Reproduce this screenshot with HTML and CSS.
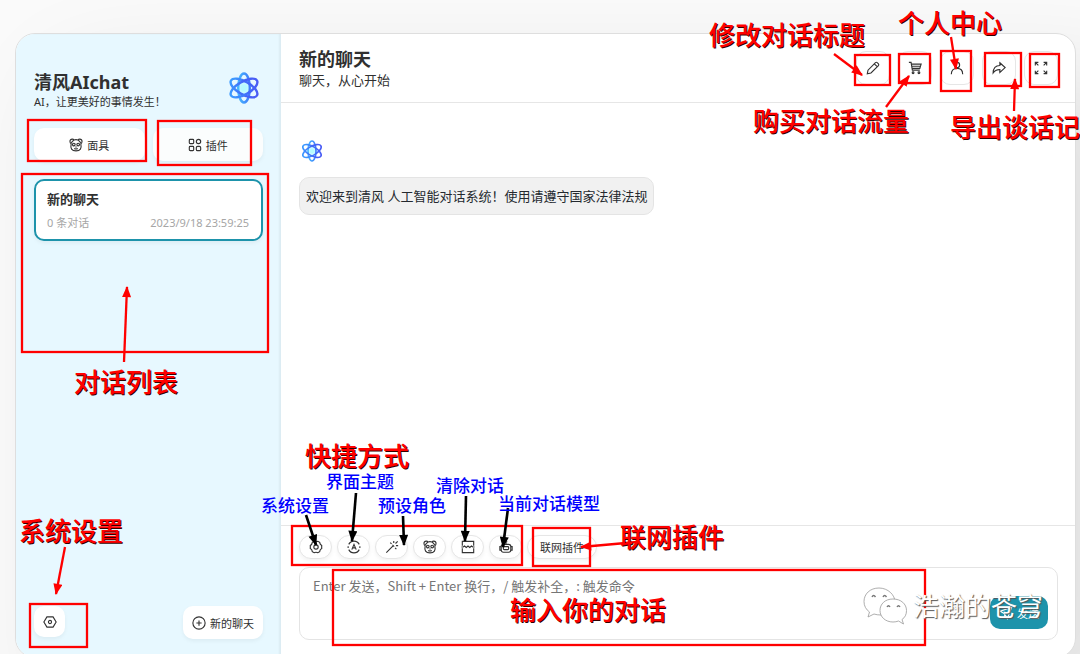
FILE: index.html
```html
<!DOCTYPE html>
<html lang="zh-CN">
<head>
<meta charset="utf-8">
<meta name="viewport" content="width=device-width, initial-scale=1">
<title>清风AIchat</title>
<link rel="stylesheet" href="styles.css">
</head>
<body>
<svg class="defs" aria-hidden="true">
  <defs>
    <linearGradient id="atom" x1="0" y1="0" x2="1" y2="0">
      <stop offset="0" stop-color="#3d9cff"/><stop offset="0.6" stop-color="#4266f8"/><stop offset="1" stop-color="#4a5cf5"/>
    </linearGradient>
    <linearGradient id="atomTall" x1="0" y1="0" x2="1" y2="0">
      <stop offset="0" stop-color="#46b8ff"/><stop offset="1" stop-color="#3f7bfa"/>
    </linearGradient>
    <radialGradient id="core"><stop offset="0.3" stop-color="#b5fbff"/><stop offset="1" stop-color="#b5fbff" stop-opacity="0.200"/></radialGradient>
    <symbol id="logo" viewBox="0 0 32 32">
      <circle cx="16" cy="16" r="8" fill="url(#core)"/>
      <g fill="none" stroke-width="2.400">
        <ellipse cx="16" cy="16" rx="5.800" ry="14.500" stroke="url(#atomTall)"/>
        <ellipse cx="16" cy="16" rx="15" ry="6.500" transform="rotate(30 16 16)" stroke="url(#atom)"/>
        <ellipse cx="16" cy="16" rx="15" ry="6.500" transform="rotate(-30 16 16)" stroke="url(#atom)"/>
      </g>
    </symbol>
    <symbol id="bear" viewBox="0 0 16 16">
      <path d="M2.500 6.500C.8 5.500.8 3 1.800 2S5 1.200 5.600 2.200Q8 1.500 10.400 2.200C11 1.200 13.200 1 14.200 2S15.200 5.500 13.500 6.500Q15.300 14.700 8 14.700T2.500 6.500Z"/>
      <path d="M2.500 5.500L5.600 2.200M13.500 5.500L10.400 2.200"/>
      <circle cx="5.500" cy="7.500" r="1.500"/><circle cx="10.500" cy="7.500" r="1.500"/>
      <path d="M7.200 10.300h1.600M6 12q2 1.200 4 0"/>
    </symbol>
  </defs>
</svg>

<div class="page">
  <div class="window">
    <aside class="sidebar">
      <header class="brand">
        <div>
          <h1 class="title">清风AIchat</h1>
          <p class="brand-sub">AI，让更美好的事情发生！</p>
        </div>
        <svg class="brand-logo" aria-hidden="true"><use href="#logo"/></svg>
      </header>
      <div class="side-tabs">
        <button class="side-btn" type="button"><svg class="icon"><use href="#bear"/></svg>面具</button>
        <button class="side-btn side-btn-soft" type="button">
          <svg class="icon" viewBox="0 0 16 16"><rect x="1.500" y="1.500" width="5" height="5" rx="1"/><circle cx="12" cy="4" r="2.500"/><rect x="1.500" y="9.500" width="5" height="5" rx="1"/><rect x="9.500" y="9.500" width="5" height="5" rx="1.500"/></svg>插件
        </button>
      </div>
      <nav class="chat-list">
        <a class="chat-item" href="#">
          <strong class="chat-name">新的聊天</strong>
          <span class="chat-meta"><span>0 条对话</span><time>2023/9/18 23:59:25</time></span>
        </a>
      </nav>
      <footer class="side-foot">
        <button class="side-btn square" type="button" aria-label="设置">
          <svg class="icon" viewBox="0 0 16 16"><path d="M4.500 2.200h7L15 8l-3.500 5.800h-7L1 8z"/><circle cx="8" cy="8" r="1.800"/></svg>
        </button>
        <button class="side-btn new-chat" type="button">
          <svg class="icon" viewBox="0 0 16 16"><circle cx="8" cy="8" r="7"/><path d="M8 5v6M5 8h6"/></svg>新的聊天
        </button>
      </footer>
    </aside>

    <main class="chat">
      <header class="chat-head">
        <div>
          <h2 class="title">新的聊天</h2>
          <p class="chat-sub">聊天，从心开始</p>
        </div>
        <div class="tools">
          <button class="tool" type="button" aria-label="修改标题"><svg class="icon" viewBox="0 0 16 16"><path d="M1.500 14.500l.8-4 8.500-8.700q1-.8 2 0l1.400 1.400q.8 1 0 2L5.700 13.700zM9.500 3.200l3.300 3.300"/></svg></button>
          <button class="tool" type="button" aria-label="购买流量"><svg class="icon" viewBox="0 0 16 16"><path d="M1 1.500h2.500L5 10.500h8.500M4 3.500h11l-1.500 5H5M4 6h10"/><circle cx="5.800" cy="13.500" r="1"/><circle cx="12.500" cy="13.500" r="1"/></svg></button>
          <button class="tool" type="button" aria-label="个人中心"><svg class="icon" viewBox="0 0 16 16"><circle cx="8" cy="4.500" r="3"/><path d="M1.500 15c0-4 2.500-6.500 6.500-6.500s6.500 2.500 6.500 6.500"/></svg></button>
          <button class="tool" type="button" aria-label="导出"><svg class="icon" viewBox="0 0 16 16"><path d="M9 2l6 5.500L9 13V9.800Q4 9.500 1.300 13.500 1.500 5.500 9 5.200z"/></svg></button>
          <button class="tool" type="button" aria-label="全屏"><svg class="icon" viewBox="0 0 16 16"><path d="M5 1.500H1.500V5M1.500 1.500L5 5M11 1.500h3.500V5M14.500 1.500L11 5M5 14.500H1.500V11M1.500 14.500L5 11M11 14.500h3.500V11M14.500 14.500L11 11"/></svg></button>
        </div>
      </header>

      <section class="messages">
        <svg class="avatar" aria-hidden="true"><use href="#logo"/></svg>
        <p class="bubble">欢迎来到清风 人工智能对话系统！使用请遵守国家法律法规</p>
      </section>

      <form class="composer">
        <div class="chips">
          <button class="chip" type="button" aria-label="系统设置"><svg class="icon" viewBox="0 0 16 16"><path d="M5.800 1.500q2.200 1 4.400 0l2 1.200q.2 2.200 2.300 3.500v3.600q-2.100 1-2.300 3.500l-2 1.200q-2.200-1-4.400 0l-2-1.200Q3.600 11 1.500 9.800V6.200Q3.600 5 3.800 2.700z"/><circle cx="8" cy="8" r="2.500"/></svg></button>
          <button class="chip" type="button" aria-label="界面主题"><svg class="icon" viewBox="0 0 16 16"><path d="M2 5a6.700 6.700 0 0 1 12 0M2 11a6.700 6.700 0 0 0 12 0M1.300 7v2M14.700 7v2M5.500 11L8 5l2.500 6M6.500 9h3"/></svg></button>
          <button class="chip" type="button" aria-label="快捷指令"><svg class="icon" viewBox="0 0 16 16"><path d="M1.500 14.500l8-8M8.500 5.500l2 2M10 1v2.500M6 3l1.500 1.500M12 4l2.500-2.500M12.500 6.500H15M11.500 9l1.500 1.500"/></svg></button>
          <button class="chip" type="button" aria-label="预设角色"><svg class="icon"><use href="#bear"/></svg></button>
          <button class="chip" type="button" aria-label="清除对话"><svg class="icon" viewBox="0 0 16 16"><path d="M1.500 6.500v-5h13v5M1.500 9.500v5h13v-5M.5 8h2l1.500-1.200L6 8.500l2-1.700 2 1.700 2-1.700L13.500 8h2"/></svg></button>
          <button class="chip" type="button" aria-label="当前对话模型"><svg class="icon" viewBox="0 0 16 16"><rect x="2.500" y="5" width="11" height="9" rx="2.500"/><rect x="5" y="7.500" width="6" height="3.500" rx="1"/><path d="M8 5V2M6.500 2h3M2.500 7.500H1v4h1.500M13.500 7.500H15v4h-1.500"/></svg></button>
          <button class="chip chip-text" type="button">联网插件</button>
        </div>
        <div class="input-box">
          <textarea class="input" aria-label="消息" placeholder="Enter 发送，Shift + Enter 换行，/ 触发补全，: 触发命令"></textarea>
          <button class="send" type="button"><svg class="icon" viewBox="0 0 16 16"><path d="M14.500 1.500L1.500 6l5 3 3 5.500zM6.500 9.500v4"/></svg>发送</button>
        </div>
      </form>
    </main>
  </div>

  <div class="notes">
    <svg class="marks" width="1080" height="654" aria-hidden="true">
      <defs>
        <marker id="headRed" viewBox="0 0 10 8" refX="9" refY="4" markerWidth="12" markerHeight="9" markerUnits="userSpaceOnUse" orient="auto"><path d="M0 0l10 4-10 4z" fill="#f00"/></marker>
        <marker id="headBlack" viewBox="0 0 10 8" refX="9" refY="4" markerWidth="12" markerHeight="9" markerUnits="userSpaceOnUse" orient="auto"><path d="M0 0l10 4-10 4z"/></marker>
      </defs>
      <g fill="none" stroke="#f00" stroke-width="2.300">
        <rect x="28" y="120" width="118" height="41"/>
        <rect x="158" y="121" width="93" height="44"/>
        <rect x="22" y="174" width="246" height="178"/>
        <rect x="30" y="604" width="57" height="43"/>
        <rect x="855" y="55" width="35" height="30"/>
        <rect x="899" y="54" width="31" height="29"/>
        <rect x="941" y="51" width="30" height="40"/>
        <rect x="985" y="53" width="36" height="33"/>
        <rect x="1030" y="54" width="29" height="33"/>
        <rect x="292" y="526" width="230" height="39"/>
        <rect x="533" y="528" width="57" height="38"/>
        <rect x="333" y="570" width="592" height="75"/>
      </g>
      <g fill="none" stroke="#f00" stroke-width="2.300">
        <path d="M124 362L127 287" marker-end="url(#headRed)"/>
        <path d="M65 547L56 594" marker-end="url(#headRed)"/>
        <path d="M834 54L862 75" marker-end="url(#headRed)"/>
        <path d="M886 107L909 76" marker-end="url(#headRed)"/>
        <path d="M951 37L956 69" marker-end="url(#headRed)"/>
        <path d="M1014 111L1015 79" marker-end="url(#headRed)"/>
        <path d="M637 542L581 547" marker-end="url(#headRed)"/>
      </g>
      <g fill="none" stroke="#000" stroke-width="2.600">
        <path d="M306 515L316 545" marker-end="url(#headBlack)"/>
        <path d="M356 493L352 541" marker-end="url(#headBlack)"/>
        <path d="M403 516L404 545" marker-end="url(#headBlack)"/>
        <path d="M466 496L465 541" marker-end="url(#headBlack)"/>
        <path d="M508 508L503 547" marker-end="url(#headBlack)"/>
      </g>
    </svg>
    <span class="note n-title">修改对话标题</span>
    <span class="note n-user">个人中心</span>
    <span class="note n-buy">购买对话流量</span>
    <span class="note n-export">导出谈话记</span>
    <span class="note n-list">对话列表</span>
    <span class="note n-settings">系统设置</span>
    <span class="note n-quick">快捷方式</span>
    <span class="note n-net">联网插件</span>
    <span class="note n-input">输入你的对话</span>
    <span class="note small s-settings">系统设置</span>
    <span class="note small s-theme">界面主题</span>
    <span class="note small s-role">预设角色</span>
    <span class="note small s-clear">清除对话</span>
    <span class="note small s-model">当前对话模型</span>
    <div class="watermark">
      <svg class="wechat" viewBox="0 0 44 38" aria-hidden="true">
        <g fill="#fff" stroke="#999" stroke-width="0.800">
          <path d="M16 1C7 1 1 7 1 14.500c0 4.500 2 8 5.500 10.500L5 30l6-3q3 1 7 1c8 0 14-6 14-13S25 1 16 1z"/>
          <path d="M30 12c-8 0-13 5-13 11.500S22.500 35 30 35q3 0 5.500-1l5 3-1.500-4.500c3-2 4.500-5 4.500-9C43.500 17 38 12 30 12z"/>
        </g>
        <path d="M9 10q1.500-3 3.500 0M20 10q1.500-3 3.500 0M24 20q1.500-2.500 3 0M34 20q1.500-2.500 3 0" fill="none" stroke="#777" stroke-width="1.400"/>
      </svg>
      <span>浩瀚的苍穹</span>
    </div>
  </div>
</div>
</body>
</html>
```
FILE: styles.css
```css
* { box-sizing: border-box; }

body {
  margin: 0;
  background: #fafafa;
  color: #303030;
  font-family: "Noto Sans", "Noto Sans CJK SC", sans-serif;
  font-size: 13px;
}

h1, h2, p { margin: 0; }

button, textarea { font: inherit; color: inherit; }

.defs { position: absolute; width: 0; height: 0; }

.page {
  position: relative;
  height: 100vh;
  padding: 33px 4px 0 15px;
  overflow: hidden;
}

.window {
  display: flex;
  height: calc(100vh - 29px);
  overflow: hidden;
  background: #fff;
  border: 1px solid #dedede;
  border-radius: 20px;
  box-shadow: 50px 50px 100px 10px rgba(0, 0, 0, 0.1);
}

.icon {
  flex: none;
  width: 14px;
  height: 14px;
  fill: none;
  stroke: #333;
  stroke-width: 1.300;
}

.title {
  font-size: 18px;
  line-height: 24px;
  font-weight: 700;
}

.sidebar {
  display: flex;
  flex-direction: column;
  flex: 0 0 265px;
  padding: 36px 18px 18px;
  background: #e7f8ff;
  box-shadow: inset -2px 0 2px rgba(0, 0, 0, 0.05);
}

.brand {
  display: flex;
  justify-content: space-between;
}

.brand-sub { font-size: 11px; line-height: 16px; }

.brand-logo { width: 32px; height: 36px; margin-right: 3px; }

.side-tabs { display: flex; gap: 8px; margin-top: 18px; }

.side-btn {
  display: flex;
  flex: 1;
  align-items: center;
  justify-content: center;
  gap: 4px;
  height: 33px;
  padding: 0 9px;
  border: 0;
  border-radius: 10px;
  background: #fff;
  box-shadow: 0 2px 4px rgba(0, 0, 0, 0.05);
  font-size: 11px;
}

.side-btn-soft { background: #fbfdfd; }

.chat-list { flex: 1; margin-top: 18px; }

.chat-item {
  display: block;
  padding: 8px 12px 8px 11px;
  border: 2px solid #1d93ab;
  border-radius: 10px;
  background: #fff;
  box-shadow: 0 2px 4px rgba(0, 0, 0, 0.05);
  color: inherit;
  text-decoration: none;
}

.chat-name { display: block; line-height: 20px; }

.chat-meta {
  display: flex;
  justify-content: space-between;
  margin-top: 6px;
  color: #a6a6a6;
  font-size: 11px;
  line-height: 16px;
}

.side-foot { display: flex; justify-content: space-between; }

.side-btn.square { flex: none; width: 31px; height: 31px; }

.side-btn.new-chat { flex: none; width: 80px; }

.chat { display: flex; flex: 1; flex-direction: column; min-width: 0; }

.chat-head {
  display: flex;
  align-items: center;
  justify-content: space-between;
  height: 69px;
  padding: 0 17px 0 18px;
  border-bottom: 1px solid #e6e6e6;
}

.chat-sub { line-height: 18px; }

.tools { display: flex; gap: 8px; }

.tool {
  display: grid;
  place-items: center;
  width: 34px;
  height: 34px;
  padding: 0;
  border: 1px solid #e6e6e6;
  border-radius: 10px;
  background: #fff;
}

.messages { flex: 1; padding: 37px 18px; }

.avatar { display: block; width: 22px; height: 22px; margin-left: 2px; }

.bubble {
  width: fit-content;
  margin-top: 15px;
  padding: 8px 6px;
  border: 1px solid #e4e4e4;
  border-radius: 10px;
  background: #f1f1f1;
  color: #24292f;
  line-height: 20px;
}

.composer {
  padding: 9px 17px 17px 18px;
  border-top: 1px solid #e6e6e6;
}

.chips { display: flex; gap: 5px; }

.chip {
  display: grid;
  place-items: center;
  width: 33px;
  height: 24px;
  padding: 0;
  border: 1px solid #e6e6e6;
  border-radius: 12px;
  background: #fff;
  box-shadow: 0 2px 4px rgba(0, 0, 0, 0.05);
  font-size: 11px;
}

.chip-text { width: auto; padding: 0 12px; }

.input-box {
  display: flex;
  align-items: flex-end;
  height: 73px;
  margin-top: 8px;
  padding: 0 9px 10px 0;
  border: 1px solid #e4e4e4;
  border-radius: 10px;
}

.input {
  flex: 1;
  align-self: stretch;
  padding: 8px 13px;
  border: 0;
  outline: 0;
  background: transparent;
  font-family: "Noto Sans CJK SC", sans-serif;
  line-height: 20px;
  resize: none;
}

.input::placeholder { color: #757575; opacity: 1; }

.send {
  display: flex;
  align-items: center;
  justify-content: center;
  gap: 4px;
  width: 58px;
  height: 33px;
  padding: 0;
  border: 0;
  border-radius: 10px;
  background: #1d93ab;
  color: #fff;
  font-size: 11px;
}

.send .icon { stroke: #fff; }

/* Annotation layer drawn over the interface */
.notes { position: absolute; top: 0; left: 0; pointer-events: none; }

.marks { display: block; }

.note {
  position: absolute;
  color: #f00;
  font-family: "Noto Sans CJK SC", sans-serif;
  font-size: 26px;
  font-weight: 500;
  line-height: 30px;
  white-space: nowrap;
  text-shadow: 1px 1px 0 #300;
}

.n-title { left: 709px; top: 19px; }
.n-user { left: 898px; top: 7px; }
.n-buy { left: 753px; top: 105px; }
.n-export { left: 950px; top: 111px; }
.n-list { left: 74px; top: 366px; }
.n-settings { left: 19px; top: 515px; }
.n-quick { left: 305px; top: 440px; }
.n-net { left: 620px; top: 521px; }
.n-input { left: 510px; top: 594px; }

.note.small {
  color: #00f;
  font-size: 17px;
  font-weight: 500;
  line-height: 20px;
  text-shadow: none;
}

.s-settings { left: 261px; top: 495px; }
.s-theme { left: 326px; top: 471px; }
.s-role { left: 378px; top: 495px; }
.s-clear { left: 436px; top: 475px; }
.s-model { left: 498px; top: 493px; }

.watermark {
  position: absolute;
  left: 863px;
  top: 587px;
  display: flex;
  align-items: center;
  gap: 6px;
  color: #fff;
  font-size: 26px;
  line-height: 38px;
  white-space: nowrap;
  text-shadow: 1px 1px 1px #555;
}

.wechat { width: 44px; height: 38px; }
```
